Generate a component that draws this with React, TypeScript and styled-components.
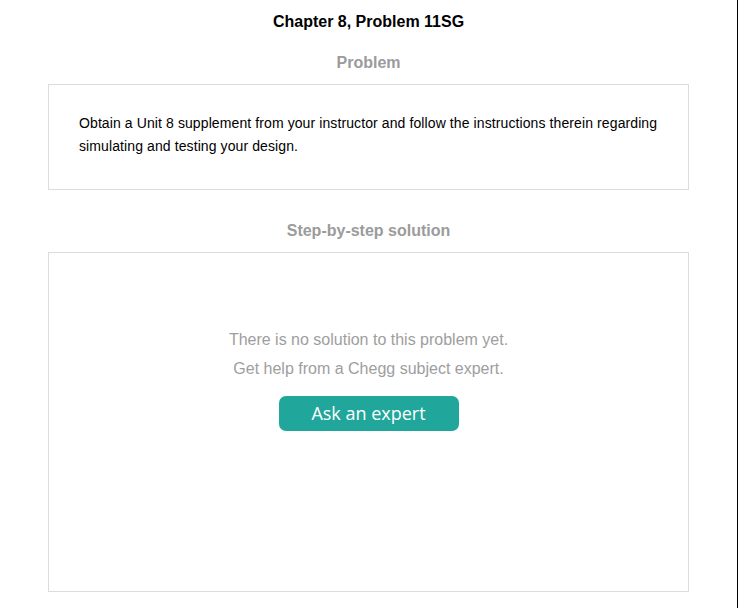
import styled, { createGlobalStyle } from "styled-components";

const GlobalStyle = createGlobalStyle`
  html, body {
    margin: 0;
    padding: 0;
    background: #ffffff;
  }
  body {
    font-family: "Liberation Sans", Arial, sans-serif;
  }
`;

const Page = styled.div`
  width: 737px;
  min-height: 608px;
  border-right: 1px solid #000000;
  box-sizing: content-box;
  display: flex;
  flex-direction: column;
  align-items: center;
  padding-top: 12px;
`;

const Title = styled.h1`
  margin: 0;
  font-size: 16px;
  font-weight: bold;
  color: #000000;
  line-height: 20px;
`;

const SectionHeading = styled.h2<{ $top: number }>`
  margin: ${(p) => p.$top}px 0 0 0;
  font-size: 16px;
  font-weight: bold;
  color: #9b9b9b;
  line-height: 22px;
`;

const Card = styled.div<{ $height: number }>`
  box-sizing: border-box;
  width: 641px;
  height: ${(p) => p.$height}px;
  border: 1px solid #dcdcdc;
  margin-top: 10px;
`;

const ProblemText = styled.p`
  margin: 0;
  padding: 27px 20px 0 30px;
  font-size: 14px;
  letter-spacing: 0.1px;
  line-height: 23px;
  color: #000000;
`;

const Empty = styled.div`
  display: flex;
  flex-direction: column;
  align-items: center;
  padding-top: 72px;
`;

const EmptyLine = styled.p`
  margin: 0;
  font-size: 16px;
  line-height: 29px;
  color: #9e9e9e;
`;

const AskButton = styled.button`
  margin-top: 13px;
  width: 180px;
  height: 35px;
  border: none;
  border-radius: 7px;
  background: #21a69b;
  color: #ffffff;
  font-family: "Open Sans", "DejaVu Sans", sans-serif;
  font-size: 18px;
  line-height: 35px;
  padding: 0;
  cursor: pointer;
`;

export default function App() {
  return (
    <>
      <GlobalStyle />
      <Page>
        <Title>Chapter 8, Problem 11SG</Title>
        <SectionHeading $top={20}>Problem</SectionHeading>
        <Card $height={106}>
          <ProblemText>
            Obtain a Unit 8 supplement from your instructor and follow the instructions therein regarding
            simulating and testing your design.
          </ProblemText>
        </Card>
        <SectionHeading $top={30}>Step-by-step solution</SectionHeading>
        <Card $height={340}>
          <Empty>
            <EmptyLine>There is no solution to this problem yet.</EmptyLine>
            <EmptyLine>Get help from a Chegg subject expert.</EmptyLine>
            <AskButton>Ask an expert</AskButton>
          </Empty>
        </Card>
      </Page>
    </>
  );
}
